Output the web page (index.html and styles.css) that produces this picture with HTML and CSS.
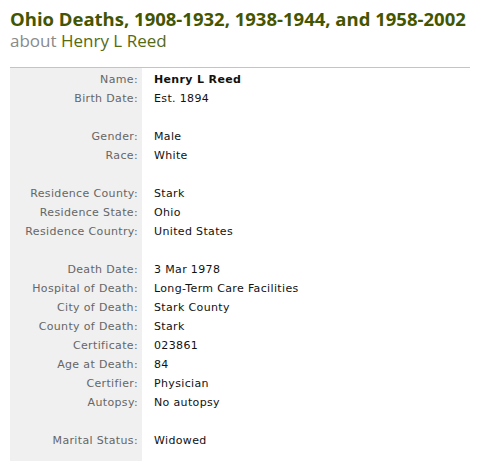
FILE: index.html
```html
<!DOCTYPE html>
<html>
<head>
<meta charset="utf-8">
<link rel="stylesheet" href="styles.css">
</head>
<body>
<div class="page">
  <h1 class="title">Ohio Deaths, 1908-1932, 1938-1944, and 1958-2002</h1>
  <div class="subtitle"><span class="about">about</span> <span class="person">Henry L Reed</span></div>
  <div class="record">
    <div class="label">Name:</div><div class="value strong">Henry L Reed</div>
    <div class="label">Birth Date:</div><div class="value">Est. 1894</div>
    <div class="label"></div><div class="value"></div>
    <div class="label">Gender:</div><div class="value">Male</div>
    <div class="label">Race:</div><div class="value">White</div>
    <div class="label"></div><div class="value"></div>
    <div class="label">Residence County:</div><div class="value">Stark</div>
    <div class="label">Residence State:</div><div class="value">Ohio</div>
    <div class="label">Residence Country:</div><div class="value">United States</div>
    <div class="label"></div><div class="value"></div>
    <div class="label">Death Date:</div><div class="value">3 Mar 1978</div>
    <div class="label">Hospital of Death:</div><div class="value">Long-Term Care Facilities</div>
    <div class="label">City of Death:</div><div class="value">Stark County</div>
    <div class="label">County of Death:</div><div class="value">Stark</div>
    <div class="label">Certificate:</div><div class="value">023861</div>
    <div class="label">Age at Death:</div><div class="value">84</div>
    <div class="label">Certifier:</div><div class="value">Physician</div>
    <div class="label">Autopsy:</div><div class="value">No autopsy</div>
    <div class="label"></div><div class="value"></div>
    <div class="label">Marital Status:</div><div class="value">Widowed</div>
  </div>
</div>
</body>
</html>
```
FILE: styles.css
```css
html, body {
  margin: 0;
  padding: 0;
  background: #fff;
}
.page {
  padding: 8px 10px 0 10px;
  width: 460px;
  min-height: 453px;
  display: flex;
  flex-direction: column;
}
.title {
  margin: 0;
  font-family: "Open Sans", "DejaVu Sans", sans-serif;
  font-weight: 700;
  font-size: 18.5px;
  line-height: 22px;
  color: #445500;
  white-space: nowrap;
}
.subtitle {
  font-family: "Open Sans", "DejaVu Sans", sans-serif;
  font-size: 17px;
  line-height: 22px;
  margin-bottom: 15px;
}
.about { color: #8a8a8a; }
.person { color: #566a14; }
.record {
  flex: 1;
  border-top: 1px solid #c4c4c4;
  display: grid;
  grid-template-columns: 132px 1fr;
  grid-auto-rows: 19px;
  align-content: start;
  padding-top: 2px;
  background: linear-gradient(to right, #f0f0f0 132px, #fff 132px);
  font-family: "DejaVu Sans", Verdana, sans-serif;
  font-size: 11px;
  letter-spacing: 0.35px;
  line-height: 19px;
}
.label {
  text-align: right;
  padding-right: 4px;
  color: #666;
}
.value {
  padding-left: 12px;
  color: #111;
}
.strong { font-weight: 700; }
```
